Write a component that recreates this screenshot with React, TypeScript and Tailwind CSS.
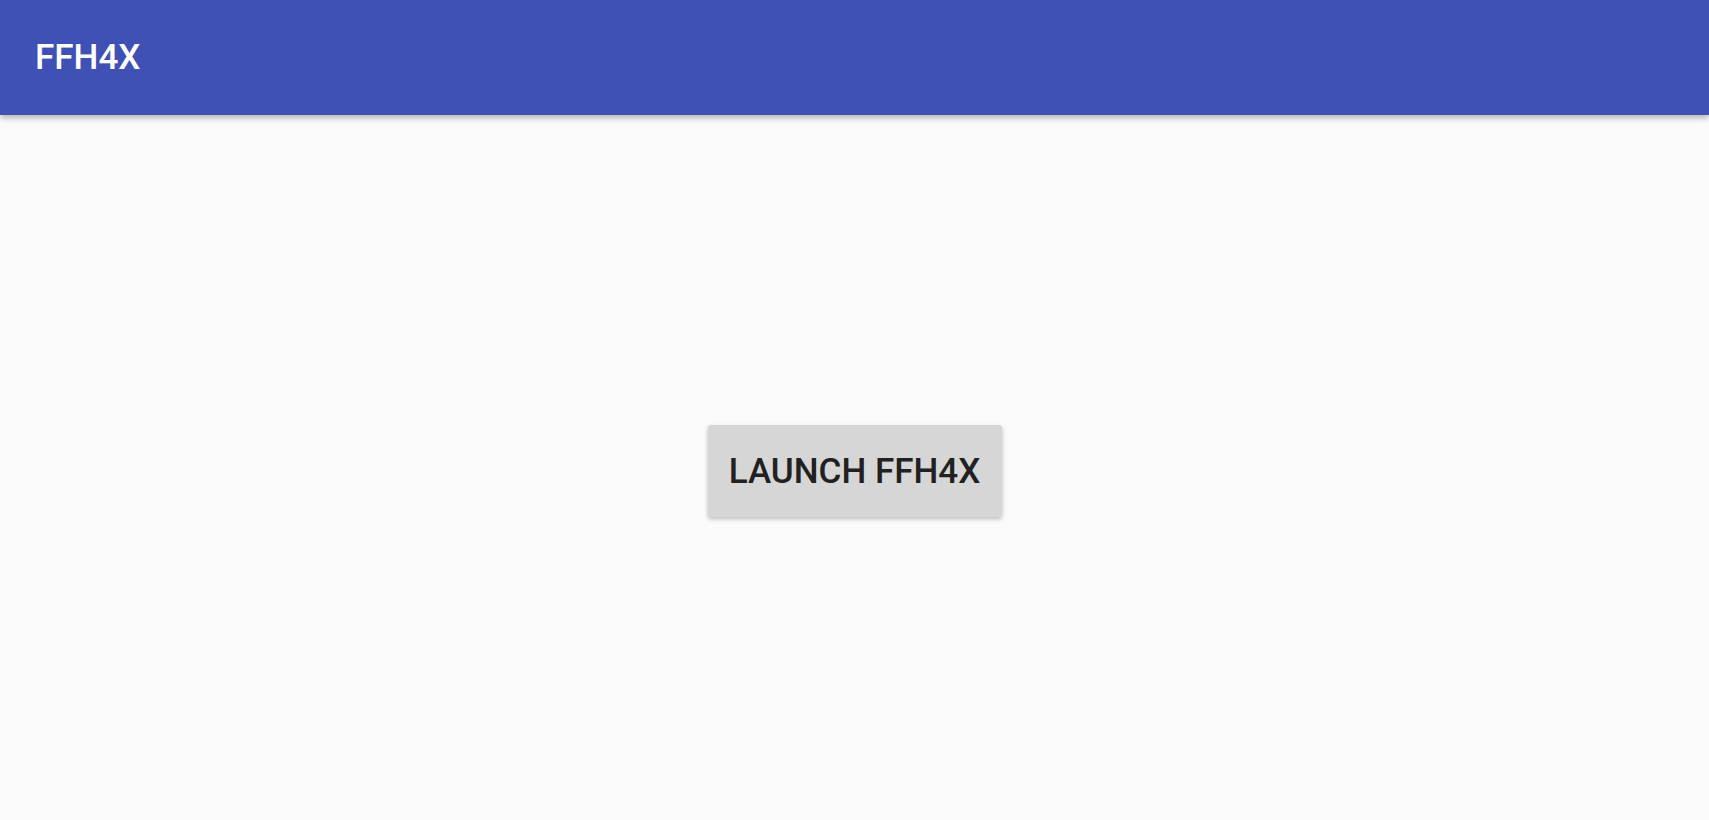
import React from 'react';

export default function App() {
  return (
    <div className="flex h-screen w-full flex-col bg-[#fafafa] font-['Roboto',sans-serif]">
      {/* App bar */}
      <header className="relative z-10 flex h-[115px] shrink-0 items-center bg-[#3f51b5] px-[35px] shadow-[0_3px_6px_rgba(0,0,0,0.28)]">
        <h1 className="text-[35px] font-medium leading-none text-white">FFH4X</h1>
      </header>

      {/* Content */}
      <main className="flex flex-1 items-center justify-center pt-[7px]">
        <button className="flex h-[92px] w-[294px] items-center justify-center rounded-[3px] bg-[#d6d6d6] text-[35px] font-medium leading-none text-[#212121] shadow-[0_2px_4px_rgba(0,0,0,0.25)]">
          LAUNCH FFH4X
        </button>
      </main>
    </div>
  );
}
